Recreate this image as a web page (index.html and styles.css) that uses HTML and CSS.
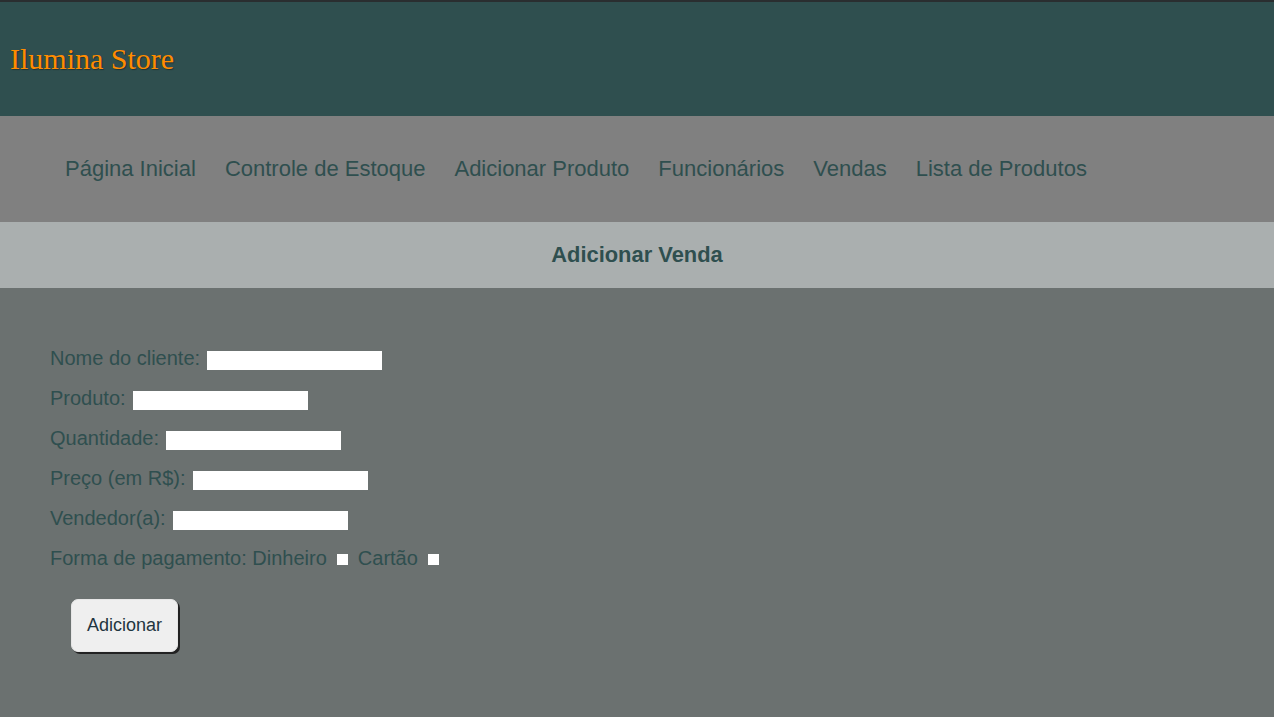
FILE: index.html
```html
<!DOCTYPE html>
<html lang="pt-BR">
<head>
<meta charset="utf-8">
<title>Ilumina Store</title>
<link rel="stylesheet" href="styles.css">
</head>
<body>
<header class="topo">
  <h1 class="marca">Ilumina Store</h1>
</header>
<nav class="menu">
  <a href="#">Página Inicial</a>
  <a href="#">Controle de Estoque</a>
  <a href="#">Adicionar Produto</a>
  <a href="#">Funcionários</a>
  <a href="#">Vendas</a>
  <a href="#">Lista de Produtos</a>
</nav>
<div class="titulo">Adicionar Venda</div>
<main class="conteudo">
  <form class="formulario">
    <div class="linha"><label>Nome do cliente:</label><input type="text" class="campo"></div>
    <div class="linha"><label>Produto:</label><input type="text" class="campo"></div>
    <div class="linha"><label>Quantidade:</label><input type="text" class="campo"></div>
    <div class="linha"><label>Preço (em R$):</label><input type="text" class="campo"></div>
    <div class="linha"><label>Vendedor(a):</label><input type="text" class="campo"></div>
    <div class="linha"><label>Forma de pagamento: Dinheiro</label><input type="checkbox" class="caixa"><label>Cartão</label><input type="checkbox" class="caixa"></div>
    <button type="button" class="botao">Adicionar</button>
  </form>
</main>
</body>
</html>
```
FILE: styles.css
```css
html, body {
  margin: 0;
  padding: 0;
}
body {
  background: #6b7170;
  font-family: "Liberation Sans", Arial, sans-serif;
  color: #2f4f4f;
  min-height: 717px;
}
.topo {
  background: #2f4f4f;
  border-top: 2px solid #2a2e30;
  height: 114px;
  display: flex;
  align-items: center;
  padding-left: 10px;
}
.marca {
  margin: 0;
  font-family: "Liberation Serif", "Times New Roman", serif;
  font-weight: normal;
  font-size: 30px;
  color: #ff8c00;
  text-shadow: 1px 1px 1px rgba(0,0,0,0.35);
}
.menu {
  background: #808080;
  height: 106px;
  display: flex;
  align-items: center;
  padding-left: 65px;
  gap: 29px;
}
.menu a {
  color: #2f4f4f;
  text-decoration: none;
  font-size: 22px;
}
.titulo {
  background: #aaafaf;
  height: 66px;
  display: flex;
  align-items: center;
  justify-content: center;
  font-weight: bold;
  font-size: 21.9px;
  color: #2f4f4f;
}
.conteudo {
  padding: 50px 0 0 50px;
}
.linha {
  height: 40px;
  display: flex;
  align-items: center;
  font-size: 20px;
}
.campo {
  border: 0;
  margin: 4px 0 0 7px;
  padding: 0;
  width: 175px;
  height: 19px;
  background: #fff;
  outline: none;
}
.caixa {
  -webkit-appearance: none;
  appearance: none;
  width: 11px;
  height: 11px;
  background: #fff;
  border: 0;
  margin: 2px 10px 0 10px;
}
.botao {
  margin: 21px 0 0 21px;
  width: 107px;
  height: 53px;
  background: #efefef;
  border: 1px solid #e6e6e6;
  border-radius: 7px;
  box-shadow: 2px 2px 0 #222;
  font-family: "Liberation Sans", Arial, sans-serif;
  font-size: 18px;
  color: #1f3540;
  padding: 0;
}
```
